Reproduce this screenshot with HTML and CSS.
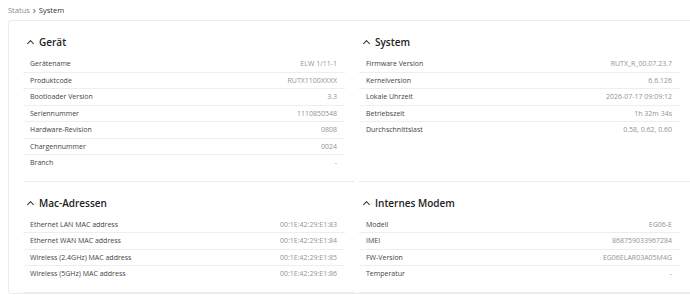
FILE: index.html
```html
<!DOCTYPE HTML>
<html lang="de">
  <head>
    <title>Status - System</title>
    <meta charset="utf-8">
    <link rel="stylesheet" href="styles.css">
  </head>
  <body>

  <div class="crumbs">
    <span class="crumb">Status</span>
    <span class="crumb-sep">&#8250;</span>
    <span class="crumb current">System</span>
  </div>

  <div class="card">
    <div class="grid">

      <div class="section">
        <h2 class="section-title"><span class="chev"></span>Gerät</h2>
        <div class="row"><span class="label">Gerätename</span><span class="value">ELW 1/11-1</span></div>
        <div class="row"><span class="label">Produktcode</span><span class="value">RUTX1100XXXX</span></div>
        <div class="row"><span class="label">Bootloader Version</span><span class="value">3.3</span></div>
        <div class="row"><span class="label">Seriennummer</span><span class="value">1110850548</span></div>
        <div class="row"><span class="label">Hardware-Revision</span><span class="value">0808</span></div>
        <div class="row"><span class="label">Chargennummer</span><span class="value">0024</span></div>
        <div class="row"><span class="label">Branch</span><span class="value">-</span></div>
      </div>

      <div class="section">
        <h2 class="section-title"><span class="chev"></span>System</h2>
        <div class="row"><span class="label">Firmware Version</span><span class="value">RUTX_R_00.07.23.7</span></div>
        <div class="row"><span class="label">Kernelversion</span><span class="value">6.6.126</span></div>
        <div class="row"><span class="label">Lokale Uhrzeit</span><span class="value">2026-07-17 09:09:12</span></div>
        <div class="row"><span class="label">Betriebszeit</span><span class="value">1h 32m 34s</span></div>
        <div class="row"><span class="label">Durchschnittslast</span><span class="value">0.58, 0.62, 0.60</span></div>
      </div>

      <div class="section">
        <h2 class="section-title"><span class="chev"></span>Mac-Adressen</h2>
        <div class="row"><span class="label">Ethernet LAN MAC address</span><span class="value">00:1E:42:29:E1:83</span></div>
        <div class="row"><span class="label">Ethernet WAN MAC address</span><span class="value">00:1E:42:29:E1:84</span></div>
        <div class="row"><span class="label">Wireless (2.4GHz) MAC address</span><span class="value">00:1E:42:29:E1:85</span></div>
        <div class="row"><span class="label">Wireless (5GHz) MAC address</span><span class="value">00:1E:42:29:E1:86</span></div>
      </div>

      <div class="section">
        <h2 class="section-title"><span class="chev"></span>Internes Modem</h2>
        <div class="row"><span class="label">Modell</span><span class="value">EG06-E</span></div>
        <div class="row"><span class="label">IMEI</span><span class="value">868759033967284</span></div>
        <div class="row"><span class="label">FW-Version</span><span class="value">EG06ELAR03A05M4G</span></div>
        <div class="row"><span class="label">Temperatur</span><span class="value">-</span></div>
      </div>

    </div>
  </div>

  </body>
</html>
```

FILE: styles.css
```css
html {
  height: 100%;
}
body {
  margin: 0;
  padding: 0;
  background: #ffffff;
  color: #333333;
  font-family: "Open Sans", "Noto Sans", sans-serif;
  font-size: 7px;
  overflow: hidden;
}

.crumbs {
  height: 20px;
  padding: 0 0 0 8px;
  display: flex;
  align-items: center;
  gap: 3px;
  font-size: 7.5px;
  line-height: 14px;
}
.crumb {
  color: #8a8a8a;
}
.crumb-sep {
  color: #555;
  font-size: 10px;
}
.crumb.current {
  color: #333;
}

.card {
  margin-left: 8px;
  border: 1px solid #ececec;
  border-right: none;
  border-radius: 4px 0 0 4px;
  padding-left: 14px;
}

.grid {
  display: grid;
  grid-template-columns: 332px 1fr;
  column-gap: 4px;
}

.section {
  padding: 14px 0 10px;
  border-bottom: 1px solid #ececec;
}

.section-title {
  margin: 0 0 7px;
  height: 14px;
  display: flex;
  align-items: center;
  font-size: 10px;
  font-weight: 600;
  color: #222;
}

.chev {
  width: 4px;
  height: 4px;
  margin: 3px 6px 0 5px;
  border-top: 1.1px solid #333;
  border-left: 1.1px solid #333;
  transform: rotate(45deg);
}

.row {
  margin-right: 10px;
  padding: 0 8px 0 7px;
  height: 15.5px;
  display: flex;
  justify-content: space-between;
  align-items: center;
  border-bottom: 1px solid #eeeeee;
}
.row:last-child {
  border-bottom: none;
}

.label {
  color: #444;
}
.value {
  color: #939393;
}
```
